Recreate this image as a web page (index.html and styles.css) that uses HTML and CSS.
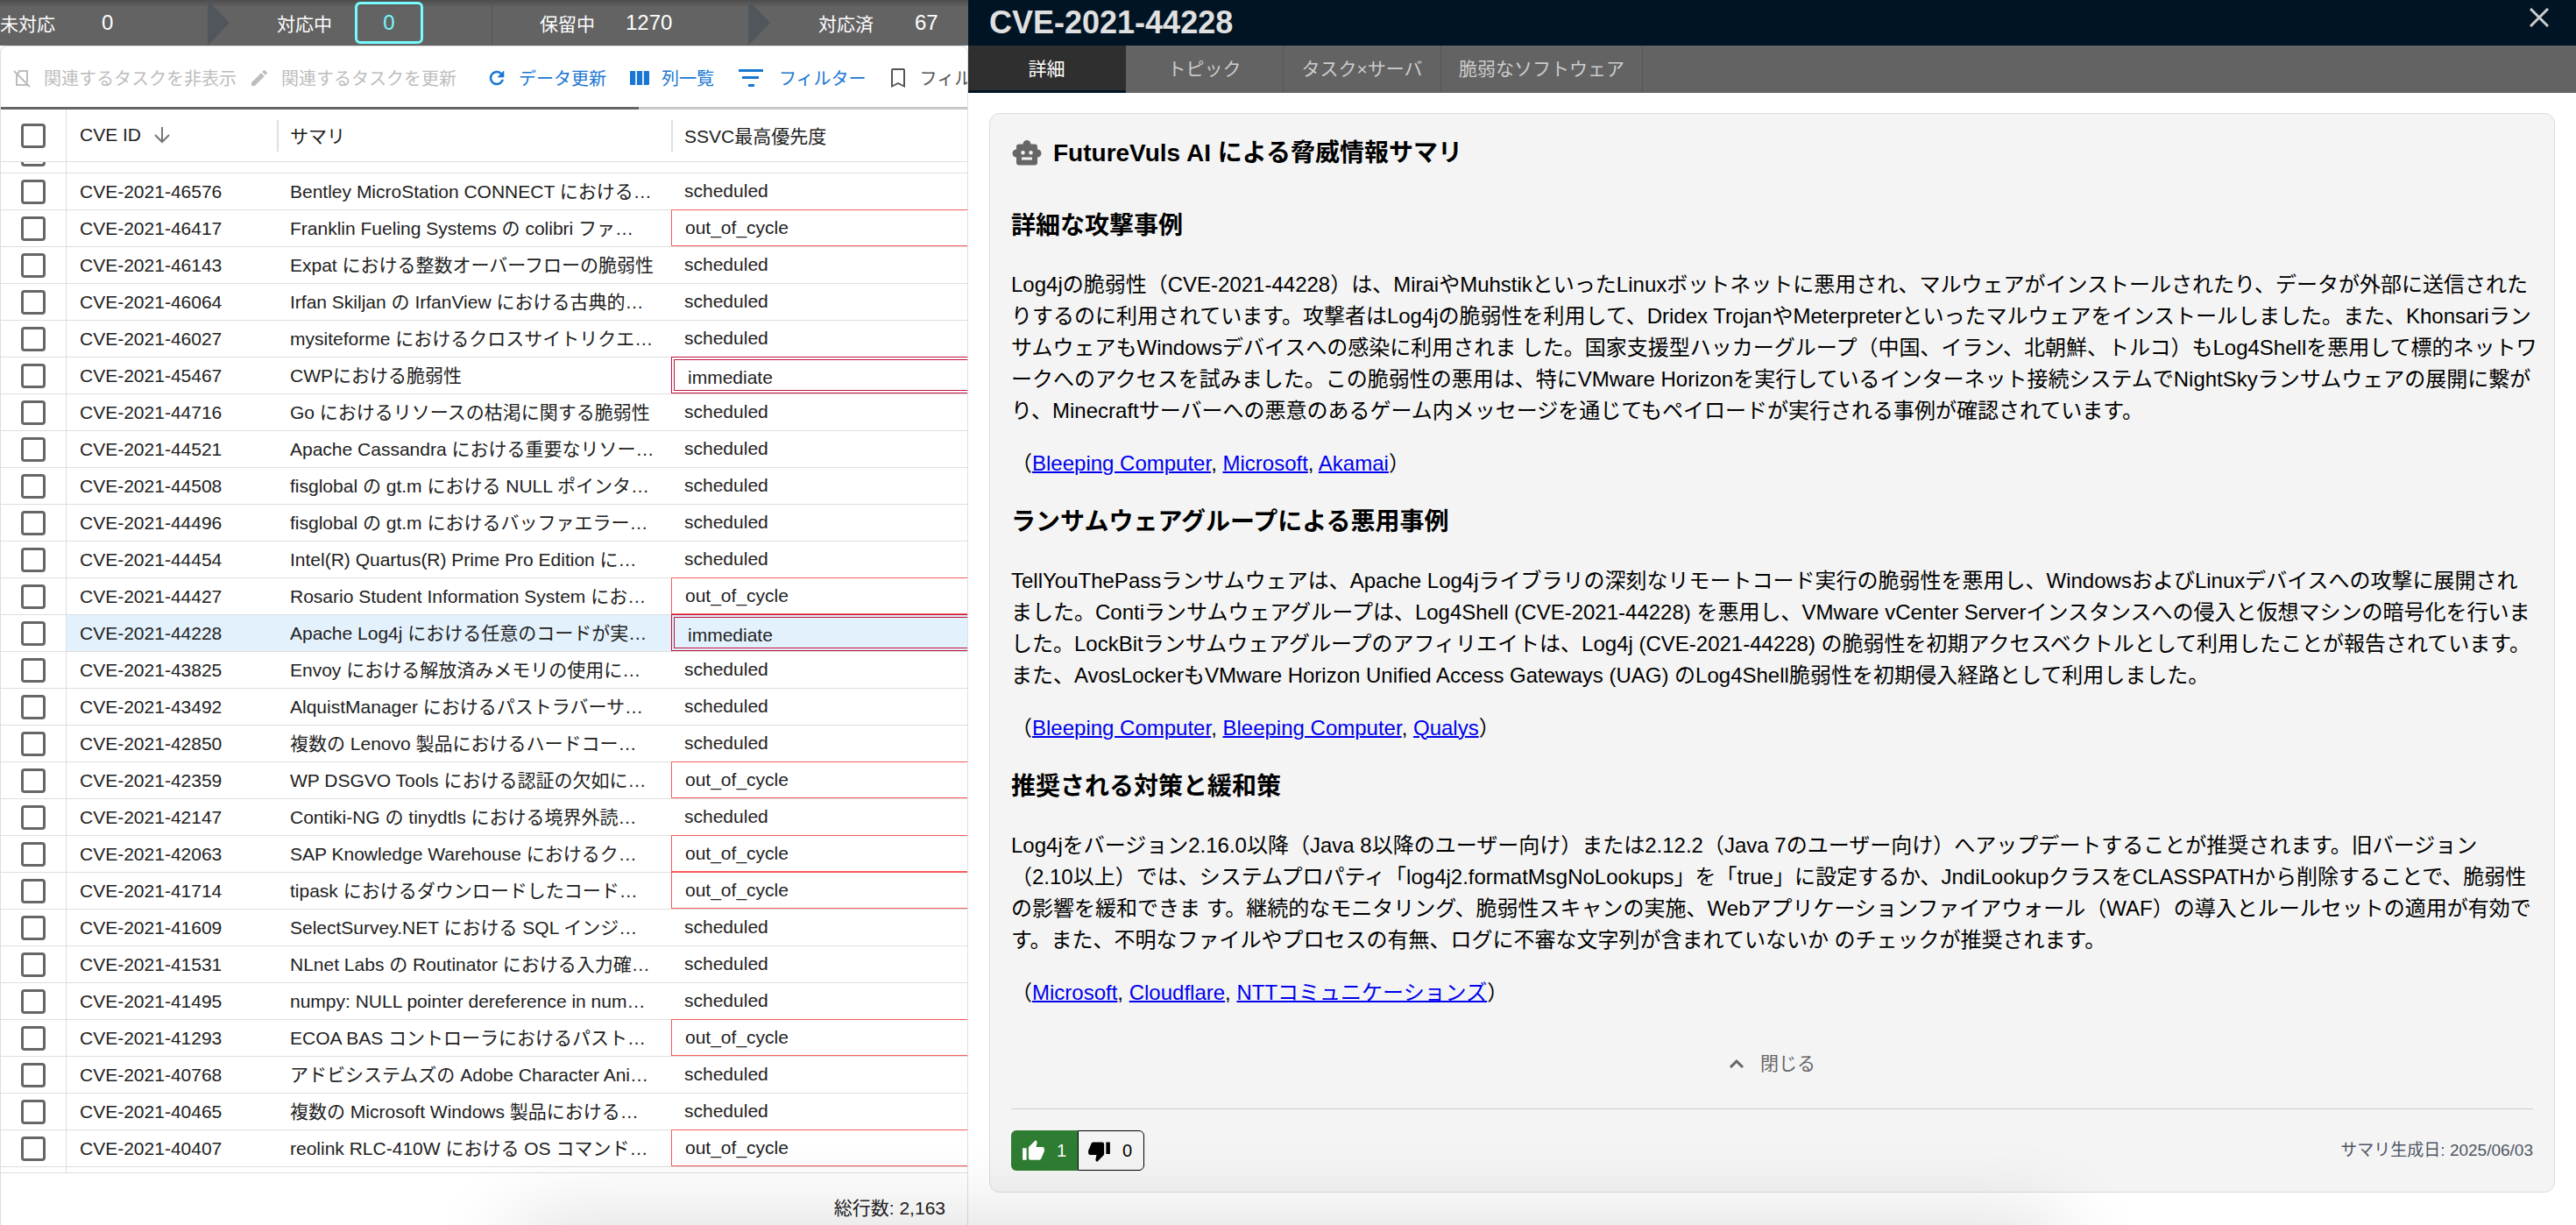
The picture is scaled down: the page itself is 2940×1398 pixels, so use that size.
FILE: index.html
```html
<!DOCTYPE html>
<html lang="ja">
<head>
<meta charset="utf-8">
<meta name="viewport" content="width=device-width, initial-scale=1">
<title>CVE-2021-44228</title>
<link rel="stylesheet" href="styles.css">
</head>
<body>
<div class="app">
  <section class="list-pane">
    <nav class="status-bar">
      <div class="status status-new"><span>未対応</span><button class="count" type="button">0</button></div>
      <div class="status status-active arrow"><span>対応中</span><button class="count selected" type="button">0</button></div>
      <div class="status status-pending"><span>保留中</span><button class="count" type="button">1270</button></div>
      <div class="status status-done arrow"><span>対応済</span><button class="count" type="button">67</button></div>
    </nav>
    <div class="grid-box">
      <div class="toolbar">
        <button class="tool" type="button" disabled><svg class="icon" viewBox="0 0 24 24"><path d="M8 4h10v13M6 7v13h12v-2M3 4l18 18M6 8l4-4" fill="none" stroke="currentColor" stroke-width="2"/></svg>関連するタスクを非表示</button>
        <button class="tool" type="button" disabled><svg class="icon" viewBox="0 0 24 24"><path fill="currentColor" d="M3 17.250V21h3.750L17.810 9.940l-3.750-3.750zM20.710 7.040c.39-.39.39-1.020 0-1.410l-2.340-2.340a1 1 0 0 0-1.410 0l-1.830 1.830 3.750 3.750z"/></svg>関連するタスクを更新</button>
        <span class="tool-divider"></span><span class="tool-tick"></span>
        <button class="tool primary" type="button"><svg class="icon" viewBox="0 0 24 24"><path fill="currentColor" d="M17.650 6.350A7.960 7.960 0 0 0 12 4a8 8 0 1 0 7.730 10h-2.080A6 6 0 1 1 12 6c1.660 0 3.140.69 4.220 1.780L13 11h7V4z" stroke="currentColor" stroke-width=".6"/></svg>データ更新</button>
        <button class="tool primary" type="button"><svg class="icon" viewBox="0 0 24 24"><path fill="currentColor" d="M1 4h6.200v16H2a1 1 0 0 1-1-1zM8.900 4h6.200v16H8.900zM16.800 4H22a1 1 0 0 1 1 1v14a1 1 0 0 1-1 1h-5.200z"/></svg>列一覧</button>
        <button class="tool primary wide" type="button"><svg class="icon icon-filter" viewBox="0 0 28 20"><path fill="currentColor" d="M0 0h28v3H0zM4 8h19v3H4zM11 17h7v3h-7z"/></svg>フィルター</button>
        <button class="tool dark" type="button"><svg class="icon" viewBox="0 0 24 24"><path fill="currentColor" d="M18 1H6a2 2 0 0 0-2 2v20l8-4 8 4V3a2 2 0 0 0-2-2m0 19-6-3-6 3V3h12z"/></svg>フィル</button>
      </div>
      <div class="scroll-track"><div class="scroll-thumb"></div></div>
      <table class="cve-table">
        <colgroup><col class="col-check"><col class="col-id"><col class="col-summary"><col></colgroup>
        <thead>
          <tr>
            <th class="check"><input type="checkbox" aria-label="すべて選択"></th>
            <th>CVE ID <svg class="sort" viewBox="0 0 20 20"><path d="M10 1v16M2 10l8 8 8-8" fill="none" stroke="currentColor" stroke-width="2"/></svg></th>
            <th class="split">サマリ</th>
            <th class="split">SSVC最高優先度</th>
          </tr>
        </thead>
        <tbody id="rows"></tbody>
      </table>
      <footer class="grid-footer">総行数: 2,163</footer>
    </div>
  </section>

  <main class="detail-pane">
    <header class="detail-header">
      <h1>CVE-2021-44228</h1>
      <button class="close" type="button" aria-label="パネルを閉じる"><svg viewBox="0 0 22 22"><path d="M1 1l20 20M21 1L1 21" stroke="currentColor" stroke-width="3"/></svg></button>
    </header>
    <nav class="tabs">
      <button class="tab active" type="button">詳細</button>
      <button class="tab" type="button">トピック</button>
      <button class="tab" type="button">タスク×サーバ</button>
      <button class="tab" type="button">脆弱なソフトウェア</button>
    </nav>
    <article class="card">
      <h2 class="card-title"><svg class="robot" viewBox="0 0 24 24"><path fill="currentColor" d="M20 9V7a2 2 0 0 0-2-2h-3a3 3 0 0 0-6 0H6a2 2 0 0 0-2 2v2a3 3 0 0 0 0 6v4a2 2 0 0 0 2 2h12a2 2 0 0 0 2-2v-4a3 3 0 0 0 0-6M7.500 11.500a1.500 1.500 0 1 1 3 0 1.500 1.500 0 0 1-3 0M16 17H8v-2h8zm-1-4a1.500 1.500 0 1 1 0-3 1.500 1.500 0 0 1 0 3"/></svg>FutureVuls AI による脅威情報サマリ</h2>
      <h3>詳細な攻撃事例</h3>
      <p>Log4jの脆弱性（CVE-2021-44228）は、MiraiやMuhstikといったLinuxボットネットに悪用され、マルウェアがインストールされたり、データが外部に送信されたりするのに利用されています。攻撃者はLog4jの脆弱性を利用して、Dridex TrojanやMeterpreterといったマルウェアをインストールしました。また、KhonsariランサムウェアもWindowsデバイスへの感染に利用されま した。国家支援型ハッカーグループ（中国、イラン、北朝鮮、トルコ）もLog4Shellを悪用して標的ネットワ<wbr>ークへのアクセスを試みました。この脆弱性の悪用は、特にVMware Horizonを実行しているインターネット接続システムでNightSkyランサムウェアの展開に繋がり、Minecraftサーバーへの悪意のあるゲーム内メッセージを通じてもペイロードが実行される事例が確認されています。</p>
      <p>（<a href="#">Bleeping Computer</a>, <a href="#">Microsoft</a>, <a href="#">Akamai</a>）</p>
      <h3>ランサムウェアグループによる悪用事例</h3>
      <p>TellYouThePassランサムウェアは、Apache Log4jライブラリの深刻なリモートコード実行の脆弱性を悪用し、WindowsおよびLinuxデバイスへの攻撃に展開されました。Contiランサムウェアグループは、Log4Shell (CVE-2021-44228) を悪用し、VMware vCenter Serverインスタンスへの侵入と仮想マシンの暗号化を行いました。LockBitランサムウェアグループのアフィリエイトは、Log4j (CVE-2021-44228) の脆弱性を初期アクセスベクトルとして利用したことが報告されています。また、AvosLockerもVMware Horizon Unified Access Gateways (UAG) のLog4Shell脆弱性を初期侵入経路として利用しました。</p>
      <p>（<a href="#">Bleeping Computer</a>, <a href="#">Bleeping Computer</a>, <a href="#">Qualys</a>）</p>
      <h3>推奨される対策と緩和策</h3>
      <p>Log4jをバージョン2.16.0以降（Java 8以降のユーザー向け）または2.12.2（Java 7のユーザー向け）へアップデートすることが推奨されます。旧バージョン（2.10以上）では、システムプロパティ「log4j2.formatMsgNoLookups」を「true」に設定するか、JndiLookupクラスをCLASSPATHから削除することで、脆弱性の影響を緩和できま す。継続的なモニタリング、脆弱性スキャンの実施、Webアプリケーションファイアウォール（WAF）の導入とルールセットの適用が有効です。また、不明なファイルやプロセスの有無、ログに不審な文字列が含まれていないか のチェックが推奨されます。</p>
      <p>（<a href="#">Microsoft</a>, <a href="#">Cloudflare</a>, <a href="#">NTTコミュニケーションズ</a>）</p>
      <button class="collapse" type="button"><svg viewBox="0 0 18 12"><path d="M2 10l7-7 7 7" fill="none" stroke="currentColor" stroke-width="3"/></svg>閉じる</button>
      <footer class="card-footer">
        <div class="votes">
          <button class="vote up" type="button" aria-label="良い評価 1"><svg viewBox="0 0 24 24"><path fill="currentColor" d="M1 21h4V9H1zm22-11a2 2 0 0 0-2-2h-6.310l.95-4.570.03-.32c0-.41-.17-.79-.44-1.060L14.170 1 7.590 7.590C7.220 7.950 7 8.450 7 9v10a2 2 0 0 0 2 2h9c.83 0 1.540-.5 1.840-1.220l3.020-7.050c.09-.23.14-.47.14-.73z"/></svg>1</button>
          <button class="vote down" type="button" aria-label="悪い評価 0"><svg viewBox="0 0 24 24"><path fill="currentColor" d="M15 3H6c-.83 0-1.540.5-1.840 1.220l-3.020 7.050c-.09.23-.14.47-.14.730v2a2 2 0 0 0 2 2h6.310l-.95 4.570-.03.32c0 .41.17.79.44 1.060L9.830 23l6.590-6.590c.36-.36.58-.86.58-1.410V5a2 2 0 0 0-2-2m4 0v12h4V3z"/></svg>0</button>
        </div>
        <span class="generated">サマリ生成日: 2025/06/03</span>
      </footer>
    </article>
  </main>
</div>
<script src="rows.js"></script>
</body>
</html>
```
FILE: rows.js
```js
const rows = [
  ["46576", "Bentley MicroStation CONNECT における…", "scheduled"],
  ["46417", "Franklin Fueling Systems の colibri ファ…", "out_of_cycle"],
  ["46143", "Expat における整数オーバーフローの脆弱性", "scheduled"],
  ["46064", "Irfan Skiljan の IrfanView における古典的…", "scheduled"],
  ["46027", "mysiteforme におけるクロスサイトリクエ…", "scheduled"],
  ["45467", "CWPにおける脆弱性", "immediate"],
  ["44716", "Go におけるリソースの枯渇に関する脆弱性", "scheduled"],
  ["44521", "Apache Cassandra における重要なリソー…", "scheduled"],
  ["44508", "fisglobal の gt.m における NULL ポインタ…", "scheduled"],
  ["44496", "fisglobal の gt.m におけるバッファエラー…", "scheduled"],
  ["44454", "Intel(R) Quartus(R) Prime Pro Edition に…", "scheduled"],
  ["44427", "Rosario Student Information System にお…", "out_of_cycle"],
  ["44228", "Apache Log4j における任意のコードが実…", "immediate"],
  ["43825", "Envoy における解放済みメモリの使用に…", "scheduled"],
  ["43492", "AlquistManager におけるパストラバーサ…", "scheduled"],
  ["42850", "複数の Lenovo 製品におけるハードコー…", "scheduled"],
  ["42359", "WP DSGVO Tools における認証の欠如に…", "out_of_cycle"],
  ["42147", "Contiki-NG の tinydtls における境界外読…", "scheduled"],
  ["42063", "SAP Knowledge Warehouse におけるク…", "out_of_cycle"],
  ["41714", "tipask におけるダウンロードしたコード…", "out_of_cycle"],
  ["41609", "SelectSurvey.NET における SQL インジ…", "scheduled"],
  ["41531", "NLnet Labs の Routinator における入力確…", "scheduled"],
  ["41495", "numpy: NULL pointer dereference in num…", "scheduled"],
  ["41293", "ECOA BAS コントローラにおけるパスト…", "out_of_cycle"],
  ["40768", "アドビシステムズの Adobe Character Ani…", "scheduled"],
  ["40465", "複数の Microsoft Windows 製品における…", "scheduled"],
  ["40407", "reolink RLC-410W における OS コマンド…", "out_of_cycle"]
];
const box = label => `<input type="checkbox" aria-label="${label}">`;
const body = rows.map(([num, summary, ssvc]) => {
  const id = "CVE-2021-" + num;
  return `<tr${num === "44228" ? ' class="current"' : ""}>
    <td class="check">${box(id)}</td><td>${id}</td><td>${summary}</td>
    <td class="ssvc ${ssvc}"><div>${ssvc}</div></td></tr>`;
}).join("");
document.getElementById("rows").innerHTML =
  `<tr class="row-above"><td class="check"><div>${box("前の行")}</div></td><td></td><td></td><td></td></tr>` +
  body +
  `<tr class="row-below"><td class="check"></td><td></td><td></td><td></td></tr>`;
```
FILE: styles.css
```css
* { box-sizing: border-box; }

body {
  margin: 0;
  background: #fff;
  color: #212121;
  font-family: "Liberation Sans", "Noto Sans CJK JP", sans-serif;
  font-size: 21px;
}

button {
  margin: 0;
  padding: 0;
  border: 0;
  background: none;
  color: inherit;
  font: inherit;
  white-space: nowrap;
}

.app {
  position: relative;
  display: grid;
  grid-template-columns: minmax(0, 1105fr) minmax(0, 1835fr);
  min-height: 100vh;
  overflow: hidden;
}

/* soft shade along the bottom of the window */
.app::after {
  content: "";
  position: absolute;
  left: 20%;
  right: 20%;
  bottom: -80px;
  height: 80px;
  box-shadow: 0 0 100px rgba(0, 0, 0, .16);
  pointer-events: none;
}

/* list pane */
.list-pane {
  display: flex;
  flex-direction: column;
  overflow: hidden;
}

.status-bar {
  display: grid;
  grid-template-columns: 237fr 324fr 293fr 251fr;
  height: 52px;
  background: linear-gradient(#4c4c4c, #636363 8px);
  color: #fff;
}

.status {
  position: relative;
  display: flex;
  align-items: center;
  white-space: nowrap;
}

.status-active { padding-left: 79px; gap: 26px; }
.status-pending { padding-left: 54px; gap: 35px; border-left: 1px solid #555; }
.status-done { padding-left: 80px; gap: 47px; }
.status-new { gap: 53px; }

.arrow::before {
  content: "";
  position: absolute;
  left: 0;
  top: 0;
  width: 25px;
  height: 52px;
  background: #51565c;
  clip-path: polygon(0 0, 100% 50%, 0 100%);
}

.count { font-size: 24px; }

.count.selected {
  width: 78px;
  height: 48px;
  border: 3px solid #76fcff;
  border-radius: 6px;
  color: #76fcff;
}

.grid-box {
  flex: 1;
  display: flex;
  flex-direction: column;
  border: 1px solid #dedede;
  border-bottom: 0;
  border-radius: 8px 8px 0 0;
  overflow: hidden;
}

.toolbar {
  display: flex;
  align-items: center;
  gap: 14px;
  height: 69px;
  padding: 0 0 0 12px;
  overflow: hidden;
  font-size: 20px;
}

.tool {
  display: flex;
  flex: none;
  align-items: center;
  gap: 13px;
  padding-top: 2px;
}

.tool:disabled { color: #bdbdbd; }
.tool.primary { margin-right: 12px; color: #1976d2; }
.tool.wide { gap: 18px; margin: 0 10px 0 2px; }
.tool.dark { color: #555; }
.icon { width: 24px; height: 24px; }
.icon-filter { width: 28px; height: 20px; }
.tool-divider { width: 1px; height: 53px; background: #ccc; }
.tool-tick { width: 1px; height: 6px; margin-left: -8px; background: #ccc; }

.scroll-track { height: 3px; background: #c8c8c8; }
.scroll-thumb { width: 66%; height: 3px; background: #666; }

.cve-table {
  width: 100%;
  table-layout: fixed;
  border-spacing: 0;
}

.col-check { width: 75px; }
.col-id { width: 240px; }
.col-summary { width: 450px; }

th, td {
  padding: 0 15px;
  font-weight: 400;
  text-align: left;
  white-space: nowrap;
}

th {
  position: relative;
  height: 60px;
  padding-bottom: 2px;
  border-bottom: 1px solid #dedede;
}

th.split::before {
  content: "";
  position: absolute;
  left: 0;
  top: 12px;
  width: 2px;
  height: 36px;
  background: #e0e0e0;
}

td {
  height: 42px;
  border-top: 1px solid #dedede;
  line-height: 40px;
}

.check {
  padding: 0 0 0 23px;
  border-right: 1px solid #dedede;
}

input[type="checkbox"] {
  appearance: none;
  display: block;
  width: 28px;
  height: 28px;
  margin: 0;
  border: 3px solid #666;
  border-radius: 4px;
  background: #fff;
}

.sort {
  width: 20px;
  height: 20px;
  margin-left: 8px;
  color: #757575;
  vertical-align: -3px;
}

.current td:not(.check) { background: #e3f1fc; }

.ssvc { padding: 0; }
.ssvc div { height: 41px; padding-left: 15px; overflow: hidden; }
.ssvc.out_of_cycle, .ssvc.immediate { border-top: 0; }
.ssvc.out_of_cycle div { height: 42px; border: 1px solid #f85c5c; border-right: 0; }
.ssvc.immediate div { height: 42px; border: 4px double #c0143c; border-right: 0; }

.row-above td { height: 12px; border-top: 0; line-height: 12px; }
.row-above div { display: flex; align-items: flex-end; height: 12px; padding-bottom: 7px; overflow: hidden; }
.row-above input { flex: none; }
.row-below td { height: 7px; line-height: 6px; }

.grid-footer {
  display: flex;
  flex: 1;
  align-items: center;
  justify-content: flex-end;
  min-height: 60px;
  padding: 16px 25px 0 0;
  border-top: 1px solid #dedede;
}

/* detail pane */
.detail-header {
  display: flex;
  align-items: center;
  justify-content: space-between;
  height: 52px;
  padding: 0 31px 0 24px;
  background: #001424;
  color: #e0e0e0;
}

.detail-header h1 { margin: 0; font-size: 36px; line-height: 48px; }
.close { height: 30px; color: #ccc; margin-bottom: 8px; }
.close svg { width: 22px; height: 22px; }

.tabs {
  display: flex;
  height: 54px;
  background: #636363;
}

.tab {
  min-width: 180px;
  padding: 0 20px 2px;
  border-right: 1px solid #555;
  border-bottom: 3px solid transparent;
  color: #ccc;
}

.tab.active {
  background: #2f2f2f;
  border-right-color: #2f2f2f;
  border-bottom-color: #001424;
  color: #fff;
}

.card {
  margin: 23px 24px 0;
  padding: 24px;
  border: 1px solid #dcdcdc;
  border-radius: 12px;
  background: #f4f4f4;
  color: #000;
  font-size: 24px;
  line-height: 36px;
}

.card h2, .card h3 { font-size: 28px; line-height: 42px; }
.card h3 { margin: 28px 0; }
.card p { margin: 24px -6px 24px 0; }
.card h2.card-title { display: flex; align-items: center; gap: 12px; margin: 0 0 41px; }
.robot { width: 36px; height: 36px; color: #666; }
.card a { color: #0000ee; text-decoration-thickness: 2px; }

.collapse {
  display: flex;
  align-items: center;
  gap: 18px;
  height: 42px;
  margin: 42px auto 30px;
  color: #666;
  font-size: 21px;
}

.collapse svg { width: 18px; height: 12px; }

.card-footer {
  display: flex;
  align-items: center;
  justify-content: space-between;
  padding-top: 24px;
  border-top: 1px solid #ccc;
}

.votes { display: flex; }

.vote {
  display: flex;
  align-items: center;
  gap: 13px;
  width: 76px;
  height: 46px;
  padding-left: 12px;
  font-size: 20px;
}

.vote svg { width: 27px; height: 27px; }
.up { border-radius: 6px 0 0 6px; background: #2e7d32; color: #fff; }
.down { padding-left: 10px; border: 1px solid #000; border-radius: 0 6px 6px 0; }
.generated { color: #4f5664; font-size: 19px; }
```
